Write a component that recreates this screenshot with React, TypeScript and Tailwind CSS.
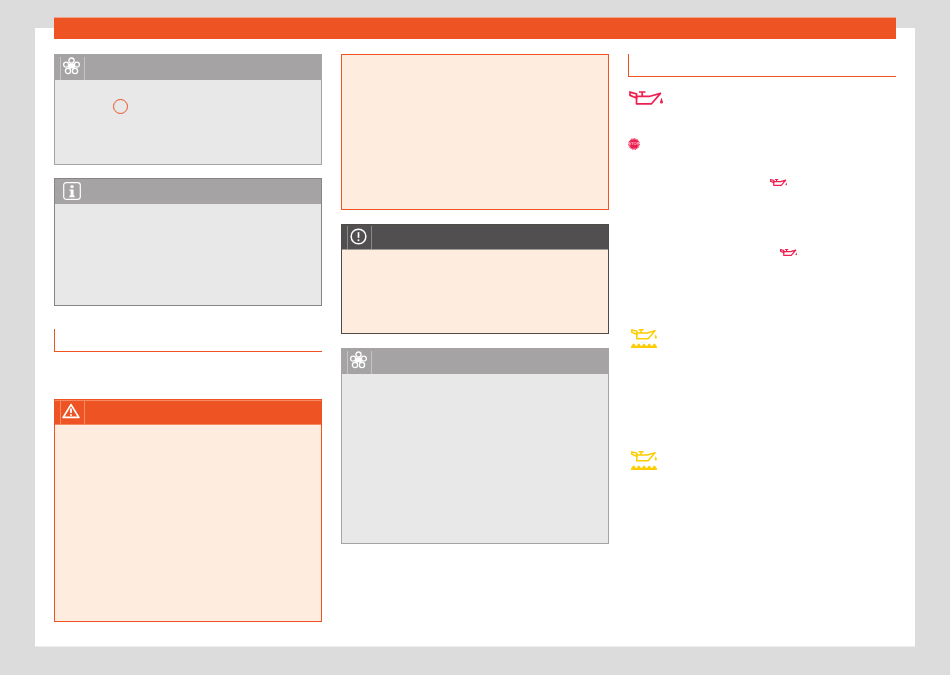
import type { ReactNode } from "react";

function FlowerIcon() {
  return (
    <svg width="17" height="18" viewBox="0 0 17 18" fill="none" stroke="white" strokeWidth="1.3">
      <circle cx="8.5" cy="3.6" r="2.6" />
      <circle cx="3.1" cy="7.6" r="2.5" />
      <circle cx="13.9" cy="7.6" r="2.5" />
      <circle cx="5" cy="14" r="2.6" />
      <circle cx="12" cy="14" r="2.6" />
      <rect x="5" y="6.600" width="7" height="5" rx="1.500" fill="white" stroke="none" />
    </svg>
  );
}

function InfoIcon() {
  return (
    <svg width="18" height="18" viewBox="0 0 18 18" fill="none">
      <rect x="0.7" y="0.7" width="16.6" height="16.6" rx="2.5" stroke="white" strokeWidth="1.2" />
      <circle cx="9" cy="4.6" r="1.7" fill="white" />
      <path d="M6.6 7.400h4v6.200h1v1.700H6.400v-1.700h1.200V9h-1z" fill="white" />
    </svg>
  );
}

function WarningIcon() {
  return (
    <svg width="18" height="16" viewBox="0 0 18 16" fill="none">
      <path d="M9 1.600 16.800 14.400H1.200z" stroke="white" strokeWidth="1.800" strokeLinejoin="round" />
      <path d="M9 5.400v4.600" stroke="white" strokeWidth="1.800" />
      <circle cx="9" cy="12" r="1" fill="white" />
    </svg>
  );
}

function AlertIcon() {
  return (
    <svg width="17" height="17" viewBox="0 0 18 18" fill="none">
      <circle cx="9" cy="9" r="7.800" stroke="white" strokeWidth="1.600" />
      <path d="M9 4.400v6" stroke="white" strokeWidth="1.800" />
      <circle cx="9" cy="13" r="1" fill="white" />
    </svg>
  );
}

function OilCan({
  color,
  className,
  waves,
  weight = 1.7,
}: {
  color: string;
  className: string;
  waves?: boolean;
  weight?: number;
}) {
  return (
    <svg className={className} viewBox={waves ? "0 0 34 25" : "0 0 34 14"} fill="none" stroke={color}>
      <path d="M1 1.200 7.500 2.800V7L1 4.400z" strokeWidth={weight} />
      <path d="M7.500 5.300H21L31.500 2.400 22.500 12.800H7.500z" strokeWidth={weight} strokeLinejoin="round" />
      <path d="M10 1h6.500M13.200 1v4.300" strokeWidth={weight} />
      <path d="M32.500 6.500 33.800 10.500a1.400 1.400 0 1 1-2.600 0z" fill={color} stroke="none" />
      {waves && (
        <path
          d="M0 25V22.500C1.500 22.500 1.500 19 3.400 19s1.900 3.500 3.400 3.500S8.700 19 10.200 19s1.900 3.500 3.400 3.500S15.500 19 17 19s1.900 3.500 3.400 3.500 1.900-3.500 3.400-3.500 1.900 3.500 3.400 3.500 1.900-3.500 3.400-3.500 1.900 3.500 3.400 3.500V25z"
          fill={color}
          stroke="none"
        />
      )}
    </svg>
  );
}

function StopIcon() {
  return (
    <svg width="12" height="12" viewBox="0 0 12 12">
      <circle cx="6" cy="6" r="4.800" fill="#ea2150" />
      <circle cx="6" cy="6" r="5.200" fill="none" stroke="#ea2150" strokeWidth="1.200" strokeDasharray="1 0.500" />
      <text
        x="6"
        y="7.400"
        textAnchor="middle"
        fontSize="4"
        fontWeight="700"
        fontFamily="Liberation Sans, sans-serif"
        fill="#ffb4c6"
      >
        STOP
      </text>
    </svg>
  );
}

function Notice({
  className,
  head,
  body,
  line,
  icon,
  iconPad = "pb-[5px] pr-[3px]",
  cell = true,
  children,
}: {
  className: string;
  head: string;
  body: string;
  line: string;
  icon: ReactNode;
  iconPad?: string;
  cell?: boolean;
  children?: ReactNode;
}) {
  return (
    <section className={`flex flex-col border ${className} ${body}`}>
      <div className={`flex h-[25px] shrink-0 items-end pl-[5px] ${head}`}>
        <div
          className={`flex h-[23px] w-[25px] items-center justify-center ${iconPad} ${cell ? `border-x ${line}` : ""}`}
        >
          {icon}
        </div>
      </div>
      {children}
    </section>
  );
}

function SectionHead() {
  return <div className="h-[23px] border-b border-l border-[#ee5323]" />;
}

export default function App() {
  return (
    <div className="min-h-screen bg-[#dcdcdc] pt-[17px]">
      <div className="relative z-10 mx-[54px] h-[22px] border-t border-[#f0a58b] bg-[#ee5323]" />
      <main className="mx-[35px] -mt-[11px] grid h-[619px] grid-cols-3 gap-[19px] border-b border-[#eeeeee] bg-white px-[19px] pt-[26px]">
        <div className="flex flex-col">
          <Notice
            className="h-[111px] border-[#a5a3a3]"
            head="bg-[#a5a3a3]"
            body="bg-[#e8e8e8]"
            line="border-[#c6c4c4]"
            icon={<FlowerIcon />}
          >
            <div className="ml-[58px] mt-[19px] h-[15px] w-[15px] rounded-full border border-[#ee5323]" />
          </Notice>
          <Notice
            className="mt-[13px] h-[128px] border-[#868484]"
            head="bg-[#a5a3a3]"
            body="bg-[#e8e8e8]"
            line="border-transparent"
            cell={false}
            iconPad="pb-[3px] pr-px"
            icon={<InfoIcon />}
          />
          <div className="mt-[23px]">
            <SectionHead />
          </div>
          <Notice
            className="mt-[47px] h-[223px] border-[#ee5323]"
            head="border-y border-[#f58a63] bg-[#ee5323]"
            body="bg-[#feecdf]"
            line="border-[#f58a63]"
            iconPad="pb-[4px] pr-[3px]"
            icon={<WarningIcon />}
          />
        </div>

        <div className="flex flex-col">
          <section className="h-[156px] border border-[#ee5323] bg-[#feecdf]" />
          <Notice
            className="mt-[14px] h-[110px] border-[#4f4a46]"
            head="border-b border-[#a09c9a] bg-[#514f4f]"
            body="bg-[#feecdf]"
            line="border-[#8b8888]"
            iconPad="pb-[3px] pr-[3px]"
            icon={<AlertIcon />}
          />
          <Notice
            className="mt-[14px] h-[196px] border-[#a5a3a3]"
            head="bg-[#a5a3a3]"
            body="bg-[#e8e8e8]"
            line="border-[#c6c4c4]"
            icon={<FlowerIcon />}
          />
        </div>

        <div className="flex flex-col">
          <SectionHead />
          <OilCan color="#ee1f50" className="ml-px mt-[14px] h-[14px] w-[34px]" />
          <div className="mt-[33px] h-[12px]">
            <StopIcon />
          </div>
          <OilCan color="#ee1f50" weight={2.400} className="ml-[142px] mt-[29px] h-[7px] w-[17px]" />
          <OilCan color="#ee1f50" weight={2.400} className="ml-[152px] mt-[63px] h-[7px] w-[17px]" />
          <OilCan color="#ffcc00" waves weight={2} className="ml-[3px] mt-[73px] h-[19px] w-[26px]" />
          <OilCan color="#ffcc00" waves weight={2} className="ml-[3px] mt-[103px] h-[19px] w-[26px]" />
        </div>
      </main>
    </div>
  );
}
